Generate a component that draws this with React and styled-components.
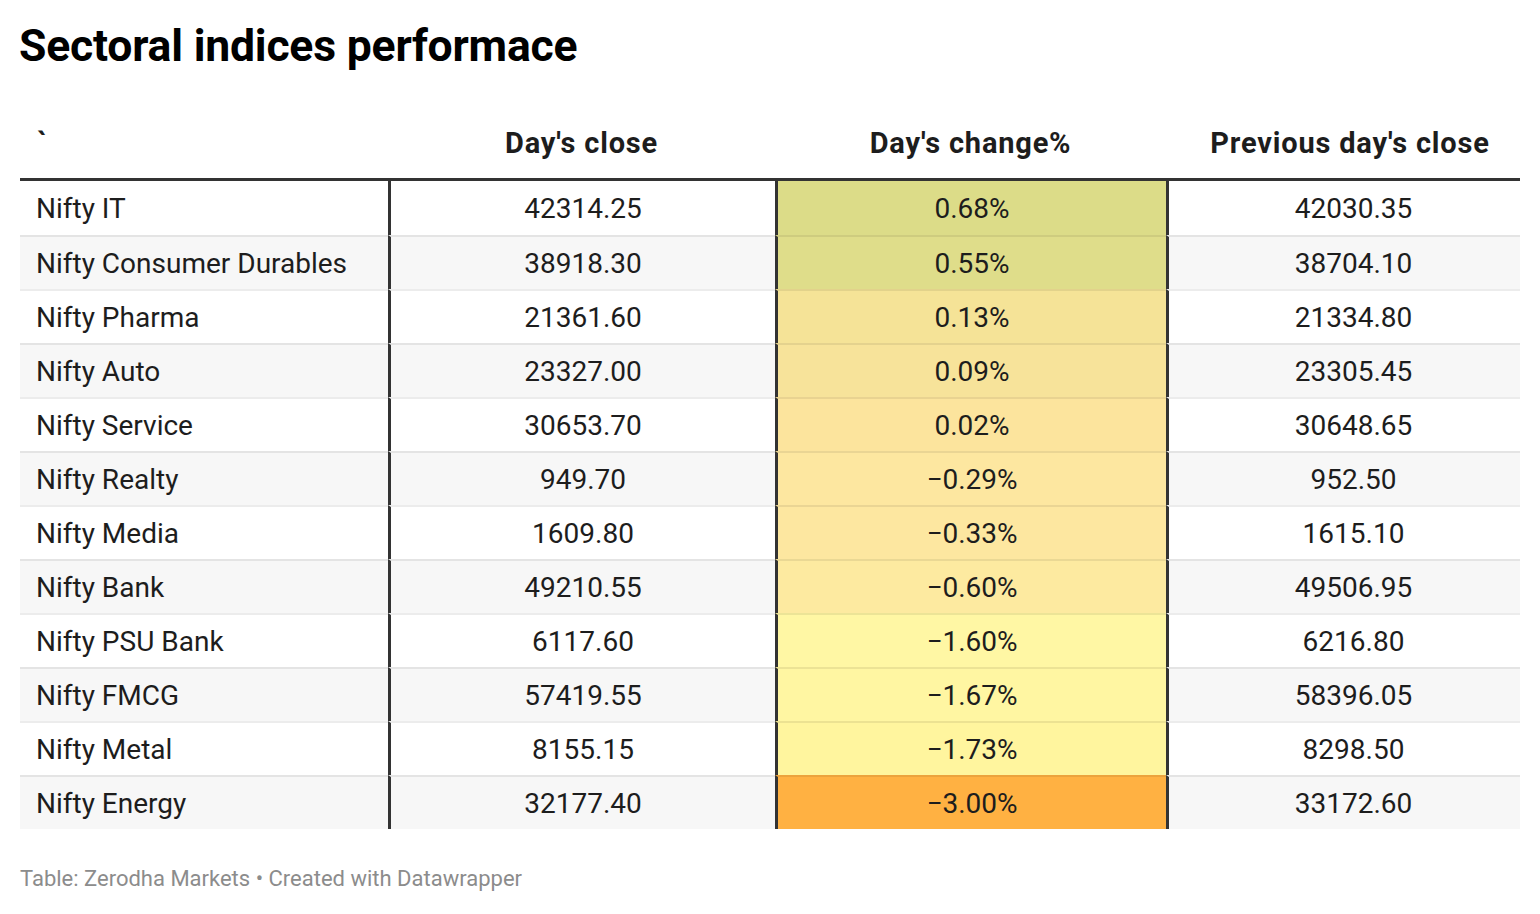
import React from "react";
import styled, { createGlobalStyle } from "styled-components";

const rows = [
  { name: "Nifty IT", close: "42314.25", change: "0.68%", prev: "42030.35", color: "#dcdc88" },
  { name: "Nifty Consumer Durables", close: "38918.30", change: "0.55%", prev: "38704.10", color: "#dfdd8a" },
  { name: "Nifty Pharma", close: "21361.60", change: "0.13%", prev: "21334.80", color: "#f5e397" },
  { name: "Nifty Auto", close: "23327.00", change: "0.09%", prev: "23305.45", color: "#f7e39a" },
  { name: "Nifty Service", close: "30653.70", change: "0.02%", prev: "30648.65", color: "#fce49d" },
  { name: "Nifty Realty", close: "949.70", change: "\u22120.29%", prev: "952.50", color: "#fde7a0" },
  { name: "Nifty Media", close: "1609.80", change: "\u22120.33%", prev: "1615.10", color: "#fde7a0" },
  { name: "Nifty Bank", close: "49210.55", change: "\u22120.60%", prev: "49506.95", color: "#fdeaa0" },
  { name: "Nifty PSU Bank", close: "6117.60", change: "\u22121.60%", prev: "6216.80", color: "#fff7a4" },
  { name: "Nifty FMCG", close: "57419.55", change: "\u22121.67%", prev: "58396.05", color: "#fff6a2" },
  { name: "Nifty Metal", close: "8155.15", change: "\u22121.73%", prev: "8298.50", color: "#fff59e" },
  { name: "Nifty Energy", close: "32177.40", change: "\u22123.00%", prev: "33172.60", color: "#ffb142" },
];

const GlobalStyle = createGlobalStyle`
  body {
    margin: 0;
    background: #fff;
    font-family: Roboto, "Liberation Sans", sans-serif;
  }
`;

const Page = styled.div`
  width: 1500px;
  padding: 20px;
`;

const Title = styled.h1`
  margin: 0 0 0 -1px;
  font-size: 44.5px;
  line-height: 52px;
  font-weight: 700;
  color: #000;
  letter-spacing: -0.2px;
`;

const Table = styled.div`
  width: 1500px;
`;

const Row = styled.div`
  display: grid;
  grid-template-columns: 368px 387px 391px 354px;
  background: ${(p) => (p.$striped ? "#f7f7f7" : "#fff")};
`;

const HeadRow = styled(Row)`
  border-bottom: 3px solid #333;
  background: #fff;
`;

const HeadCell = styled.div`
  padding: 55px 0 19px ${(p) => (p.$left ? "17px" : p.$pad || "0")};
  font-size: 29px;
  line-height: 32px;
  font-weight: 700;
  letter-spacing: 0.8px;
  color: #1d1d1d;
  text-align: ${(p) => (p.$left ? "left" : "center")};
  white-space: nowrap;
`;

const Cell = styled.div`
  height: 54px;
  box-sizing: border-box;
  display: flex;
  align-items: center;
  justify-content: ${(p) => (p.$left ? "flex-start" : "center")};
  padding-left: ${(p) => (p.$left ? "16px" : p.$pad || "0")};
  border-left: ${(p) => (p.$divider ? "3px solid #333" : "none")};
  border-top: ${(p) => (p.$first ? "none" : "2px solid rgba(0, 0, 0, 0.075)")};
  background: ${(p) => p.$bg || "transparent"};
  font-size: 28px;
  color: #1d1d1d;
  white-space: nowrap;
`;

const Footer = styled.div`
  margin-top: 37px;
  font-size: 22px;
  line-height: 26px;
  color: #8c8c8c;
`;

export default function App() {
  return (
    <Page>
      <GlobalStyle />
      <Title>Sectoral indices performace</Title>
      <Table>
        <HeadRow>
          <HeadCell $left>`</HeadCell>
          <HeadCell>Day's close</HeadCell>
          <HeadCell>Day's change%</HeadCell>
          <HeadCell $pad="14px">Previous day's close</HeadCell>
        </HeadRow>
        {rows.map((r, i) => (
          <Row key={r.name} $striped={i % 2 === 1}>
            <Cell $left $first={i === 0}>{r.name}</Cell>
            <Cell $divider $first={i === 0}>{r.close}</Cell>
            <Cell $divider $first={i === 0} $bg={r.color}>{r.change}</Cell>
            <Cell $divider $first={i === 0} $pad="18px">{r.prev}</Cell>
          </Row>
        ))}
      </Table>
      <Footer>Table: Zerodha Markets • Created with Datawrapper</Footer>
    </Page>
  );
}
